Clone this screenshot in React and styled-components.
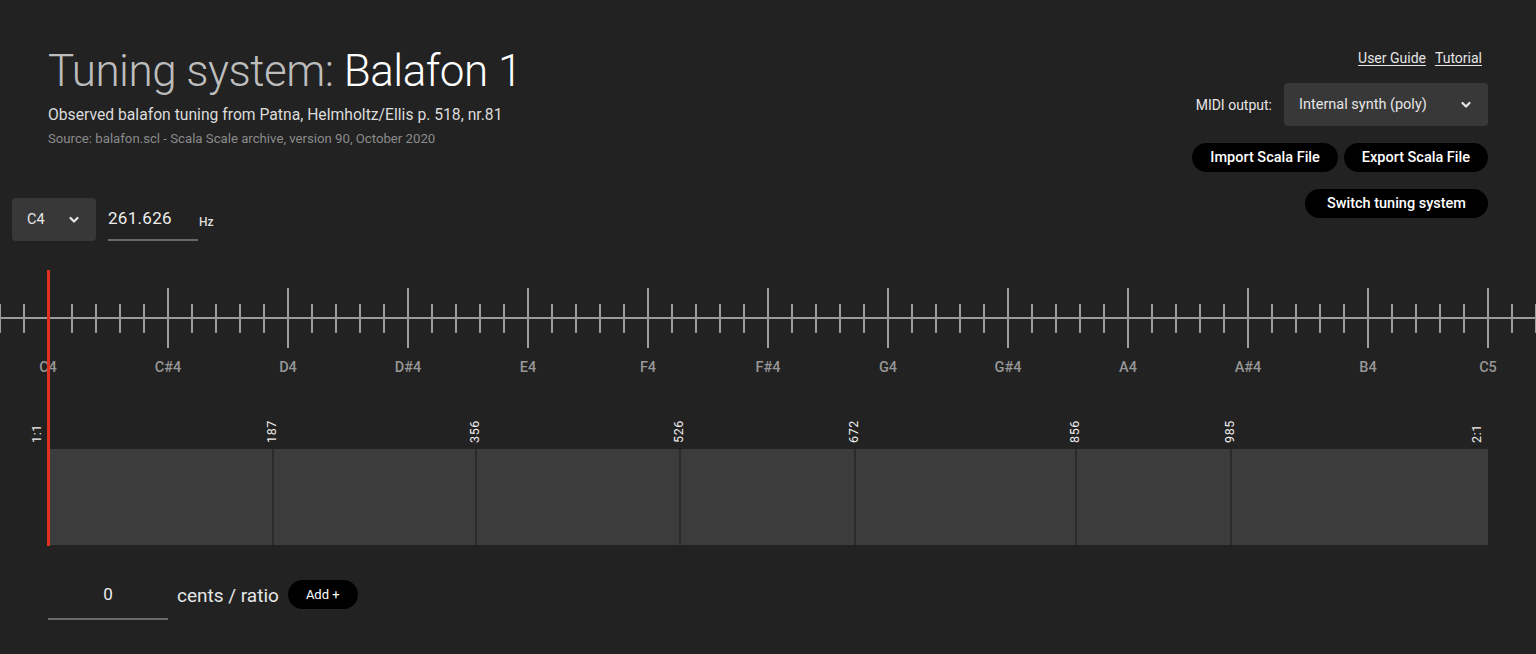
import React from "react";
import styled, { createGlobalStyle } from "styled-components";

const GlobalStyle = createGlobalStyle`
  html, body {
    margin: 0;
    padding: 0;
    background: #222222;
    font-family: Roboto, "Noto Sans", sans-serif;
    color: #e6e6e6;
  }
  * { box-sizing: border-box; }
`;

const NOTES = ["C4", "C#4", "D4", "D#4", "E4", "F4", "F#4", "G4", "G#4", "A4", "A#4", "B4", "C5"];
const STEPS = [
  { label: "1:1", cents: 0, ratio: true },
  { label: "187", cents: 187 },
  { label: "356", cents: 356 },
  { label: "526", cents: 526 },
  { label: "672", cents: 672 },
  { label: "856", cents: 856 },
  { label: "985", cents: 985 },
  { label: "2:1", cents: 1200, ratio: true },
];
const PX_PER_CENT = 1.2;

function Chevron() {
  return (
    <svg width="12" height="8" viewBox="0 0 12 8">
      <path d="M2.5 2 L6 5.5 L9.5 2" fill="none" stroke="#e6e6e6" strokeWidth="2.2" strokeLinecap="round" strokeLinejoin="round" />
    </svg>
  );
}

function Ruler() {
  const ticks = [];
  for (let x = 0; x <= 1536; x += 24) {
    const major = (x - 48) % 120 === 0;
    ticks.push(
      <line key={x} x1={x} x2={x} y1={major ? 10 : 26} y2={major ? 70 : 55} stroke="#9c9c9c" strokeWidth="2" />
    );
  }
  return (
    <RulerSvg width="1536" height="80" viewBox="0 0 1536 80">
      <line x1="0" x2="1536" y1="40" y2="40" stroke="#9c9c9c" strokeWidth="2" />
      {ticks}
    </RulerSvg>
  );
}

export default function App() {
  return (
    <Page>
      <GlobalStyle />
      <Header>
        <TitleBlock>
          <Title>
            <Muted>Tuning system: </Muted>Balafon 1
          </Title>
          <Subtitle>Observed balafon tuning from Patna, Helmholtz/Ellis p. 518, nr.81</Subtitle>
          <Source>Source: balafon.scl - Scala Scale archive, version 90, October 2020</Source>
          <FreqRow>
            <Select $width="84px">
              <span>C4</span>
              <Chevron />
            </Select>
            <FreqInput>261.626</FreqInput>
            <Unit>Hz</Unit>
          </FreqRow>
        </TitleBlock>
        <Controls>
          <Links>
            <Link href="#">User Guide</Link>
            <Link href="#">Tutorial</Link>
          </Links>
          <MidiRow>
            <FieldLabel>MIDI output:</FieldLabel>
            <Select $width="204px">
              <span>Internal synth (poly)</span>
              <Chevron />
            </Select>
          </MidiRow>
          <ButtonRow>
            <PillButton>Import Scala File</PillButton>
            <PillButton>Export Scala File</PillButton>
          </ButtonRow>
          <ButtonRow>
            <PillButton $pad="22px">Switch tuning system</PillButton>
          </ButtonRow>
        </Controls>
      </Header>

      <Stage>
        <Cursor />
        <Ruler />
        <NoteRow>
          {NOTES.map((n) => (
            <NoteLabel key={n}>{n}</NoteLabel>
          ))}
        </NoteRow>
        <Scale>
          {STEPS.map((s, i) => {
            const next = STEPS[i + 1];
            const width = next ? (next.cents - s.cents) * PX_PER_CENT : 0;
            return (
              <Segment key={s.label} style={{ width }}>
                <StepLabel $ratio={s.ratio}>{s.label}</StepLabel>
                {next && <Bar $first={i === 0} />}
              </Segment>
            );
          })}
        </Scale>
      </Stage>

      <AddRow>
        <CentsInput>0</CentsInput>
        <AddText>cents / ratio</AddText>
        <PillButton $small $pad="18px">Add +</PillButton>
      </AddRow>
    </Page>
  );
}

const Page = styled.div`
  width: 1536px;
  height: 654px;
  overflow: hidden;
  background: #222222;
`;

const Header = styled.header`
  display: flex;
  justify-content: space-between;
  align-items: flex-start;
  padding: 45px 48px 0 48px;
`;

const TitleBlock = styled.div`
  display: flex;
  flex-direction: column;
`;

const Title = styled.h1`
  margin: 0;
  font-weight: 300;
  font-size: 44px;
  line-height: 52px;
  color: #ffffff;
  letter-spacing: -0.5px;
`;

const Muted = styled.span`
  color: #bdbdbd;
`;

const Subtitle = styled.p`
  margin: 8px 0 0;
  font-size: 15.7px;
  line-height: 20px;
  color: #dcdcdc;
`;

const Source = styled.p`
  margin: 5px 0 0;
  font-size: 13.2px;
  line-height: 18px;
  color: #8a8a8a;
`;

const FreqRow = styled.div`
  display: flex;
  align-items: center;
  gap: 12px;
  margin: 50px 0 0 -36px;
`;

const Select = styled.div`
  width: ${(p) => p.$width};
  height: 43px;
  display: flex;
  align-items: center;
  justify-content: space-between;
  padding: 0 16px 0 15px;
  background: #383838;
  border-radius: 4px;
  font-size: 14.5px;
  color: #e6e6e6;
`;

const FreqInput = styled.div`
  width: 90px;
  height: 43px;
  padding-top: 10px;
  border-bottom: 2px solid #6a6a6a;
  font-size: 17px;
  color: #eeeeee;
  letter-spacing: 0.3px;
`;

const Unit = styled.span`
  margin-left: -11px;
  padding-top: 4px;
  font-size: 12px;
  font-weight: 500;
  color: #dddddd;
`;

const Controls = styled.div`
  display: flex;
  flex-direction: column;
  align-items: flex-end;
  padding-top: 5px;
`;

const Links = styled.div`
  display: flex;
  gap: 9px;
  margin-right: 6px;
`;

const Link = styled.a`
  font-size: 14px;
  color: #e6e6e6;
  text-decoration: underline;
  text-underline-offset: 2px;
`;

const MidiRow = styled.div`
  display: flex;
  align-items: center;
  gap: 12px;
  margin-top: 17px;
`;

const FieldLabel = styled.span`
  font-size: 14px;
  color: #e6e6e6;
`;

const ButtonRow = styled.div`
  display: flex;
  gap: 6px;
  margin-top: 17px;
`;

const PillButton = styled.button`
  height: 29px;
  padding: 0 ${(p) => p.$pad || "18px"};
  border: none;
  border-radius: 15px;
  background: #000000;
  color: #ffffff;
  font-family: Roboto, "Noto Sans", sans-serif;
  font-size: ${(p) => (p.$small ? "13px" : "14.5px")};
  font-weight: ${(p) => (p.$small ? 400 : 500)};
  cursor: pointer;
`;

const Stage = styled.section`
  position: relative;
  margin-top: 37px;
`;

const Cursor = styled.div`
  position: absolute;
  left: 47px;
  top: -8px;
  width: 3px;
  height: 276px;
  background: #e0301f;
  z-index: 2;
`;

const RulerSvg = styled.svg`
  display: block;
`;

const NoteRow = styled.div`
  display: grid;
  grid-template-columns: repeat(13, 120px);
  margin-left: -12px;
  height: 20px;
`;

const NoteLabel = styled.div`
  text-align: center;
  font-size: 14.5px;
  font-weight: 500;
  line-height: 20px;
  color: #979797;
`;

const Scale = styled.div`
  display: flex;
  padding-left: 48px;
  margin-top: 22px;
`;

const Segment = styled.div`
  display: flex;
  flex-direction: column;
  flex-shrink: 0;
`;

const StepLabel = styled.div`
  writing-mode: vertical-rl;
  transform: rotate(180deg);
  height: 49px;
  width: 14px;
  margin-left: ${(p) => (p.$ratio ? "-18px" : "-7px")};
  padding-top: 6px;
  font-size: 12.5px;
  line-height: 14px;
  color: #f0f0f0;
  letter-spacing: 0.6px;
`;

const Bar = styled.div`
  height: 96px;
  background: #3c3c3c;
  border-left: ${(p) => (p.$first ? "none" : "2px solid #2b2b2b")};
`;

const AddRow = styled.div`
  display: flex;
  align-items: flex-start;
  padding: 35px 48px 0;
`;

const CentsInput = styled.div`
  width: 120px;
  height: 40px;
  padding-top: 4px;
  text-align: center;
  border-bottom: 2px solid #6a6a6a;
  font-size: 17px;
  color: #eeeeee;
`;

const AddText = styled.span`
  margin: 0 9px;
  font-size: 19px;
  line-height: 31px;
  color: #e6e6e6;
`;
